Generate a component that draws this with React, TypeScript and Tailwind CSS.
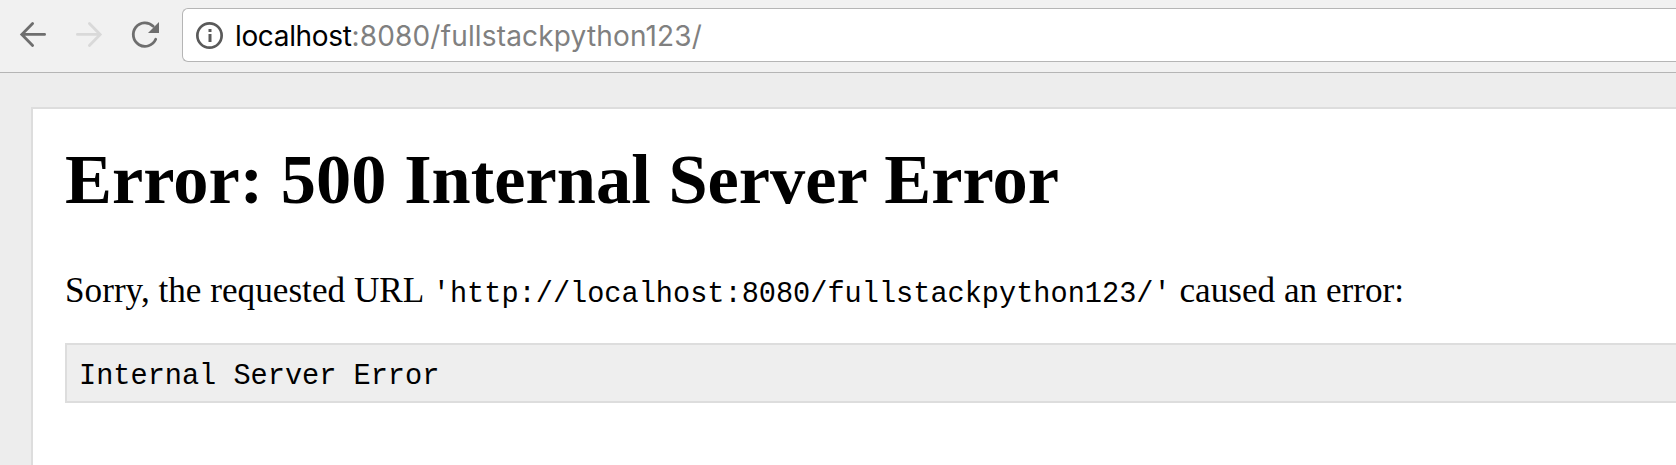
export default function App() {
  return (
    <div className="h-[465px] w-full overflow-hidden bg-[#ededed] font-['Liberation_Serif',serif] text-black">
      <header className="flex h-[73px] items-start border-b border-[#b5b5b5] bg-[#f1f1f1] pt-2">
        <nav className="flex h-[54px] w-[182px] shrink-0 items-center">
          <svg width="182" height="54" viewBox="0 8 182 54" fill="none" strokeWidth="2.8" strokeLinecap="round">
            <path d="M44.600 34.400H22M32.600 23.400L21.800 34.400L32.600 45.400" stroke="#6e6e6e" />
            <path d="M77.400 34.400H100M89.400 23.400L100.200 34.400L89.400 45.400" stroke="#d9d9d9" />
            <path d="M153.200 26.300A11.700 11.700 0 1 0 155.700 39.300" stroke="#6e6e6e" />
            <path d="M159 22v11h-11z" fill="#6e6e6e" />
          </svg>
        </nav>
        <div className="flex h-[54px] flex-1 items-center rounded-l-[6px] border border-r-0 border-[#b5b5b5] bg-white pl-[13px]">
          <svg width="28" height="28" viewBox="195.500 21 28 28" fill="none" stroke="#5a5a5a" strokeWidth="2.7">
            <circle cx="209" cy="35.500" r="12.150" />
            <path d="M209.500 34v8M209.500 29v3" strokeWidth="3" />
          </svg>
          <span className="ml-[11px] mt-0.5 whitespace-nowrap font-['Inter',sans-serif] text-[28px] leading-none tracking-[0.17px] text-[#808080]"><span className="tracking-[-0.35px] text-black">localhost</span>:8080/fullstackpython123/</span>
        </div>
      </header>
      <main className="ml-[31px] mt-[34px] h-[400px] border-2 border-r-0 border-[#dddddd] bg-white pl-8">
        <h1 className="mt-[28px] whitespace-nowrap text-[70.4px] font-bold leading-[84px] tracking-[0.03px]">Error: 500 Internal Server Error</h1>
        <p className="mt-[50px] whitespace-nowrap text-[35.2px] leading-[40px]">Sorry, the requested URL <code className="ml-px font-['Liberation_Mono',monospace] text-[28.6px]">'http://localhost:8080/fullstackpython123/'</code> caused an error:</p>
        <pre className="mt-7 h-[60px] border-2 border-r-0 border-[#dddddd] bg-[#eeeeee] pl-3 pt-[3px] font-['Liberation_Mono',monospace] text-[28.6px] leading-[58px]">Internal Server Error</pre>
      </main>
    </div>
  );
}
